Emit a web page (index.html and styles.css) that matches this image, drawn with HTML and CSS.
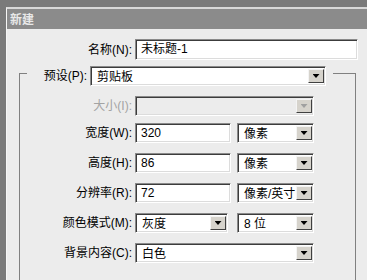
FILE: index.html
```html
<!DOCTYPE html>
<html lang="zh">
<head>
<meta charset="utf-8">
<link rel="stylesheet" href="styles.css">
</head>
<body>
<div class="win">
  <div class="title">新建</div>
  <div class="content">
    <div class="name-row">
      <span class="lbl name-lbl">名称(N):</span>
      <div class="field name-field">未标题-1</div>
    </div>
    <div class="group">
      <div class="group-head">
        <span class="edge edge-l"></span>
        <span class="lbl preset-lbl">预设(P):</span>
        <div class="field select preset"><span class="val">剪贴板</span><span class="btn"><i class="tri"></i></span></div>
        <span class="edge edge-r"></span>
      </div>
      <div class="group-body">
        <div class="row row-size">
          <span class="lbl disabled">大小(I):</span>
          <div class="ctrls">
            <div class="field select wide off"><span class="val"></span><span class="btn"><i class="tri"></i></span></div>
          </div>
        </div>
        <div class="row">
          <span class="lbl">宽度(W):</span>
          <div class="ctrls">
            <div class="field num">320</div>
            <div class="field select unit"><span class="val">像素</span><span class="btn"><i class="tri"></i></span></div>
          </div>
        </div>
        <div class="row">
          <span class="lbl">高度(H):</span>
          <div class="ctrls">
            <div class="field num">86</div>
            <div class="field select unit"><span class="val">像素</span><span class="btn"><i class="tri"></i></span></div>
          </div>
        </div>
        <div class="row">
          <span class="lbl">分辨率(R):</span>
          <div class="ctrls">
            <div class="field num">72</div>
            <div class="field select unit"><span class="val">像素/英寸</span><span class="btn"><i class="tri"></i></span></div>
          </div>
        </div>
        <div class="row">
          <span class="lbl">颜色模式(M):</span>
          <div class="ctrls">
            <div class="field select mode"><span class="val">灰度</span><span class="btn"><i class="tri"></i></span></div>
            <div class="field select unit"><span class="val">8 位</span><span class="btn"><i class="tri"></i></span></div>
          </div>
        </div>
        <div class="row">
          <span class="lbl">背景内容(C):</span>
          <div class="ctrls">
            <div class="field select wide"><span class="val">白色</span><span class="btn"><i class="tri"></i></span></div>
          </div>
        </div>
      </div>
    </div>
  </div>
</div>
</body>
</html>
```

FILE: styles.css
```css
* { box-sizing: border-box; }
html, body { margin: 0; padding: 0; }
body {
  background: #7a7a7a;
  width: 367px;
  height: 280px;
  overflow: hidden;
  font-family: "Liberation Sans", "Noto Sans CJK SC", sans-serif;
  font-size: 12px;
  color: #000;
}
.win {
  margin: 7px 0 0 6px;
  height: 273px;
  border-top: 2px solid #d8d8d8;
  border-left: 1px solid #f6f6f6;
  display: flex;
  flex-direction: column;
}
.title {
  height: 20px;
  background: #8b8b8b;
  color: #e8e8e8;
  font-weight: bold;
  line-height: 20px;
  padding-left: 3px;
  font-family: "Noto Sans CJK SC", sans-serif;
}
.content {
  flex: 1;
  background: #ececec;
  padding-top: 10px;
  display: flex;
  flex-direction: column;
}
.lbl {
  text-align: right;
  white-space: nowrap;
  line-height: 20px;
}
.disabled { color: #a3a3a3; }
.name-row {
  display: flex;
  align-items: center;
}
.name-lbl { width: 125px; margin-right: 3px; }
.field {
  background: #fff;
  height: 20px;
  border: 1px solid;
  border-color: #8a8a8a #ffffff #ffffff #8a8a8a;
  box-shadow: inset 1px 1px 0 #3c3c3c, inset -1px -1px 0 #dcdcdc;
  padding: 0 4px 0 5px;
  line-height: 18px;
  white-space: nowrap;
  overflow: hidden;
}
.name-field { width: 223px; height: 21px; line-height: 19px; }
.select {
  display: flex;
  padding: 2px 1px 2px 2px;
  line-height: 16px;
}
.select .val { flex: 1; padding-left: 4px; overflow: hidden; }
.btn {
  width: 16px;
  flex: none;
  background: #d6d3cc;
  border: 1px solid;
  border-color: #f4f4f4 #404040 #404040 #f4f4f4;
  display: flex;
  align-items: center;
  justify-content: center;
}
.tri {
  display: block;
  width: 7px;
  height: 4px;
  background: #000;
  clip-path: polygon(0 0, 100% 0, 50% 100%);
}
.off { background: #ececec; }
.off .tri { background: #a0a0a0; }
.group {
  margin: 6px 0 0 12px;
  width: 337px;
  flex: 1;
  display: flex;
  flex-direction: column;
}
.group-head {
  display: flex;
  height: 20px;
}
.edge {
  margin-top: 7px;
  border-top: 1px solid #808080;
}
.edge-l { width: 8px; border-left: 1px solid #808080; }
.edge-r { flex: 1; margin-left: 7px; border-right: 1px solid #808080; }
.preset-lbl { width: 60px; margin-right: 3px; }
.preset { width: 236px; }
.group-body {
  flex: 1;
  border-left: 1px solid #808080;
  border-right: 1px solid #808080;
  padding-top: 10px;
  display: flex;
  flex-direction: column;
  gap: 10px;
}
.row {
  display: grid;
  grid-template-columns: 112px 1fr;
  column-gap: 3px;
}
.row-size { margin-bottom: -3px; }
.ctrls { display: flex; }
.wide { width: 179px; }
.num { width: 96px; margin-right: 6px; }
.unit { width: 77px; }
.mode { width: 93px; margin-right: 9px; }
```
